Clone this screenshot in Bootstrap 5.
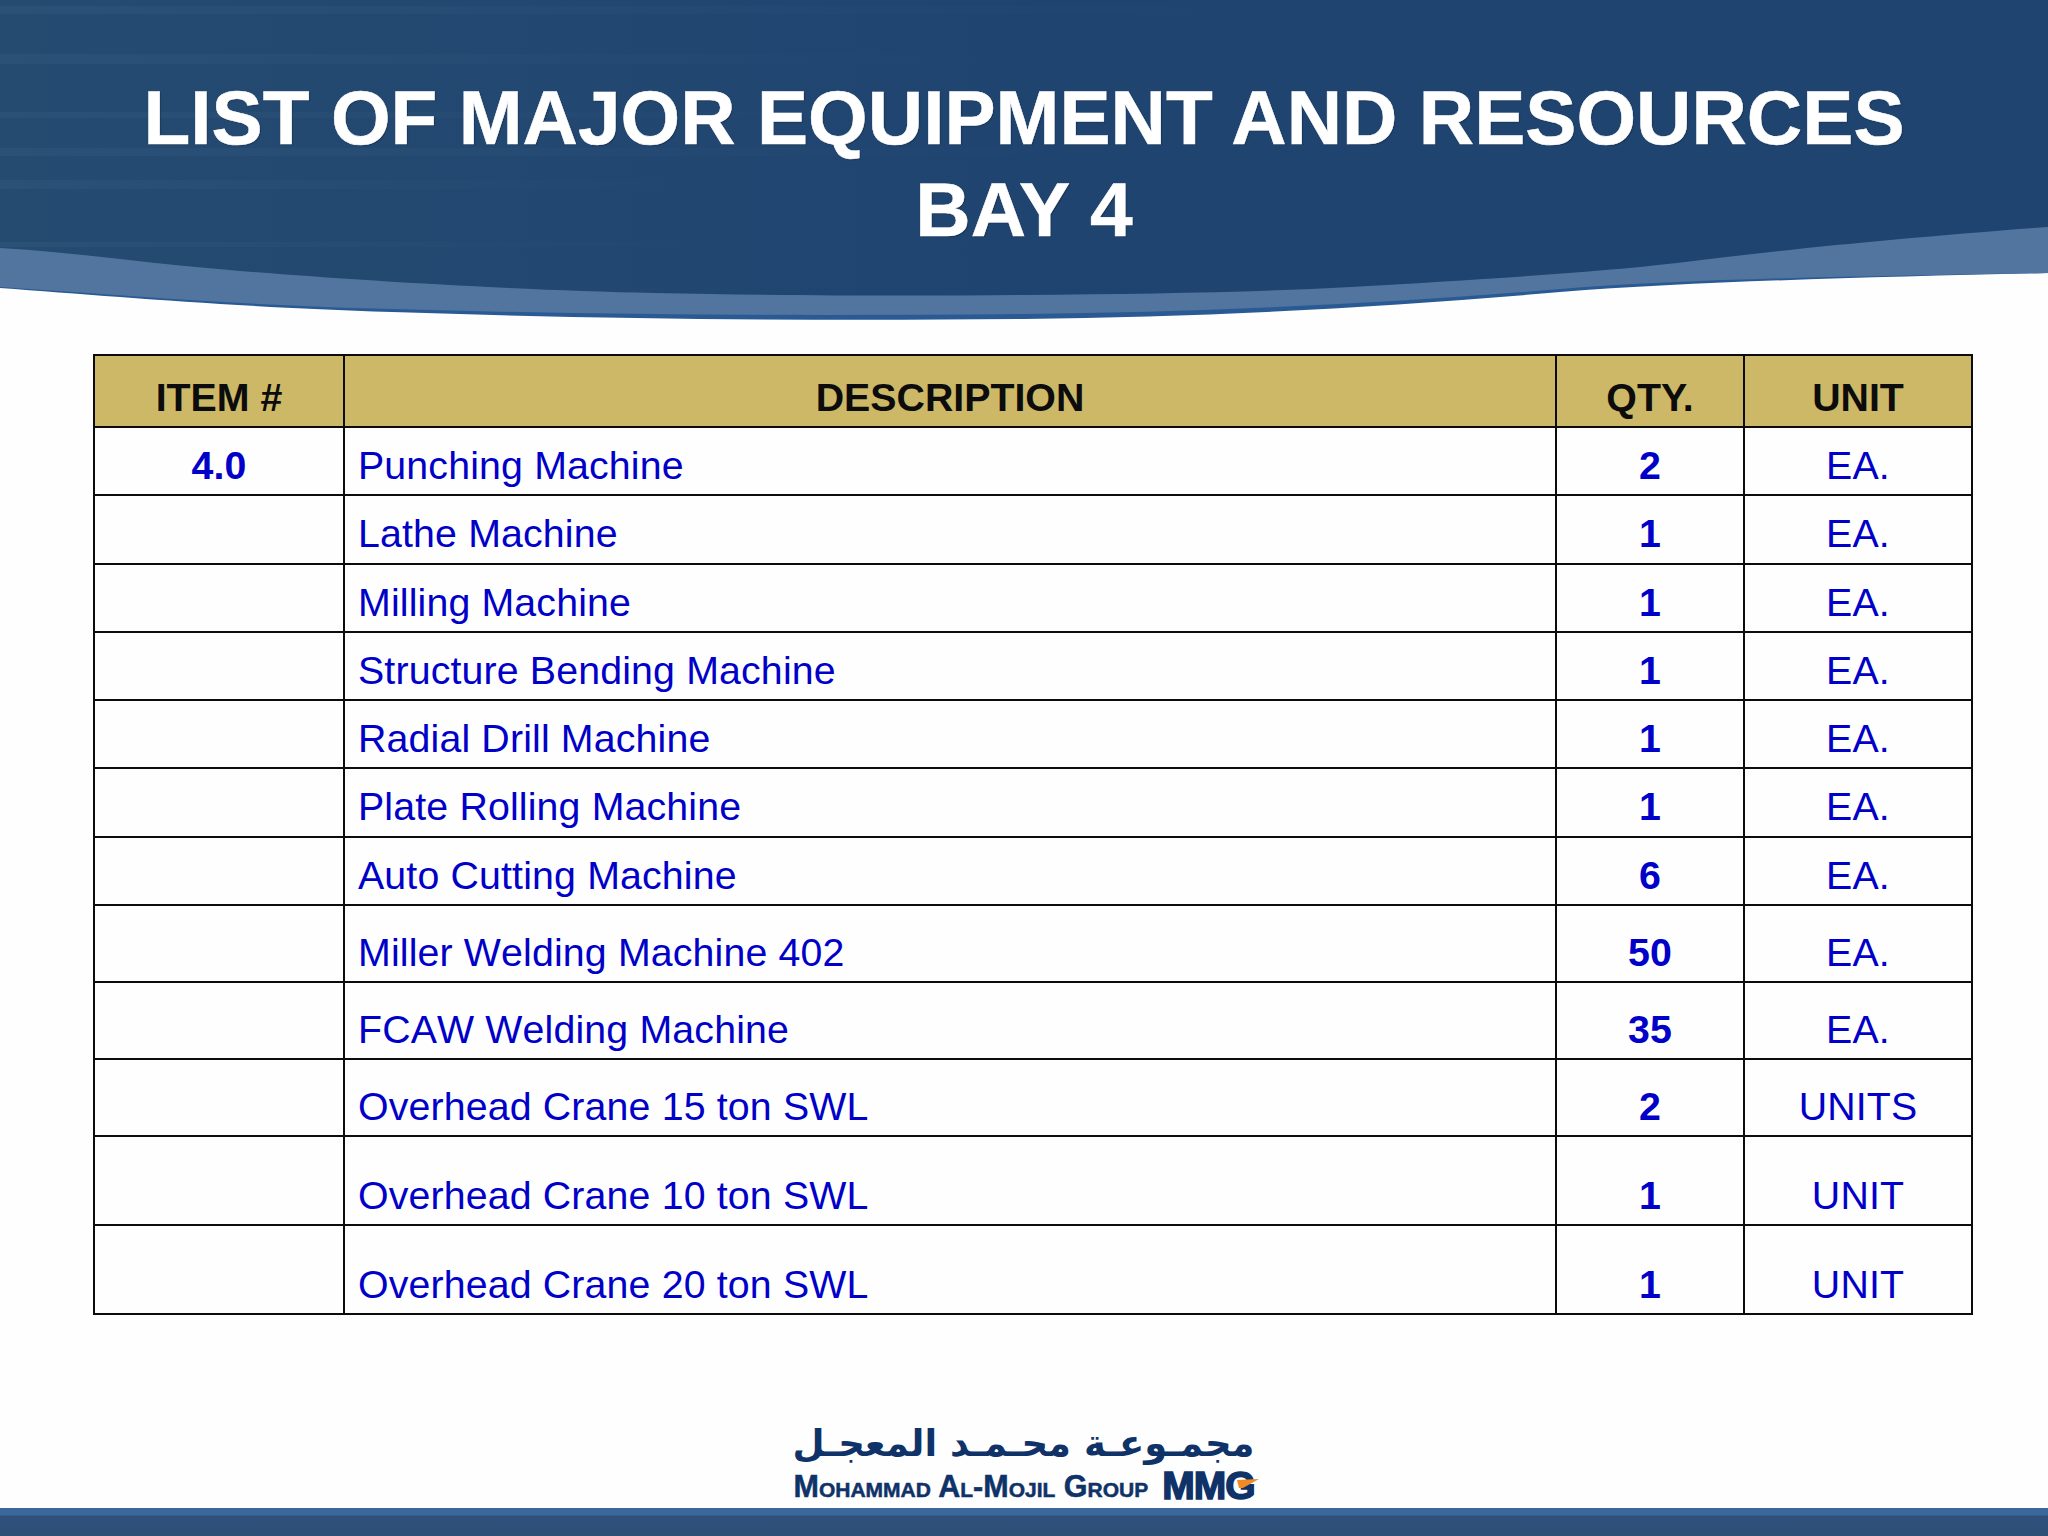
<!DOCTYPE html>
<html lang="en">
<head>
    <meta charset="UTF-8">
    <meta name="viewport" content="width=device-width, initial-scale=1.0">
    <title>List of Major Equipment and Resources</title>
    <link href="https://cdn.jsdelivr.net/npm/bootstrap@5.3.0/dist/css/bootstrap.min.css" rel="stylesheet">
    <style>
        body {
            background-color: #fefefe;
            font-family: "Liberation Sans", Arial, sans-serif;
            min-height: 1536px;
        }

        .banner {
            height: 354px;
            position: relative;
        }

        .banner svg {
            position: absolute;
            left: 0;
            top: 0;
        }

        .banner h1 {
            position: relative;
            color: #fff;
            font-size: 76.7px;
            font-weight: 700;
            line-height: 92px;
            padding-top: 72px;
            margin: 0;
            -webkit-text-stroke: .5px #fff;
            text-shadow: 1px 1px 1px rgba(20, 30, 50, .5);
        }

        .equip-wrap {
            padding-left: 93px;
        }

        .equip {
            width: 1878px;
            table-layout: fixed;
            margin-bottom: 0;
            --bs-table-bg: transparent;
        }

        .equip th,
        .equip td {
            border: 2px solid #0c0c0c;
            padding: 0 14px 9px;
            font-size: 39.3px;
            line-height: 1;
            vertical-align: bottom;
            color: #0000c8;
        }

        .equip td {
            font-kerning: none;
            letter-spacing: .15px;
            height: 68.3px;
        }

        .equip td.desc { padding-left: 13px; }

        .equip th {
            background-color: #ccb866;
            color: #0c0c0c;
            height: 72px;
        }

        .equip tr.mid td { height: 77px; }
        .equip tr.tall td { height: 89px; }

        .logo {
            width: 461px;
            color: #0f3268;
            margin-bottom: 7px;
        }

        .logo-ar {
            font-family: "DejaVu Sans", sans-serif;
            font-weight: 700;
            font-size: 37px;
            line-height: 44px;
            margin-bottom: 5px;
            white-space: nowrap;
        }

        .logo-en {
            font-weight: 700;
            font-size: 30.5px;
            line-height: 30px;
            font-variant: small-caps;
            white-space: nowrap;
            -webkit-text-stroke: .5px #0f3268;
        }

        .logo-mark {
            position: relative;
            font-size: 39px;
            line-height: 30px;
            font-weight: 700;
            letter-spacing: -1px;
            -webkit-text-stroke: 1.5px #0f3268;
        }

        .logo-mark svg {
            position: absolute;
            right: -4px;
            top: 8px;
        }

        .foot-bar {
            height: 28px;
            background: linear-gradient(#3a689b 0, #3a689b 7px, #2f507a 8px, #2e4f78 100%);
        }
    </style>
</head>
<body class="d-flex flex-column">

<!-- Title banner -->
<header class="banner text-center">
    <svg width="2048" height="325" viewBox="0 0 2048 325">
        <defs>
            <linearGradient id="sky" x1="0" y1="0" x2="1" y2="0">
                <stop offset="0" stop-color="#264b71"/>
                <stop offset=".5" stop-color="#1f4470"/>
                <stop offset="1" stop-color="#1f4470"/>
            </linearGradient>
            <linearGradient id="streak" x1="0" y1="0" x2="1" y2="0">
                <stop offset="0" stop-color="#5b86a8" stop-opacity=".1"/>
                <stop offset="1" stop-color="#5b86a8" stop-opacity="0"/>
            </linearGradient>
        </defs>
        <!-- edge under the light band -->
        <path fill="#2a5a94" d="M0 288 C110 296 230 307 392 312 C600 319 800 321 1024 319 C1200 317 1380 308 1560 292 C1700 281 1880 277 2048 273 L2048 200 L0 200 Z"/>
        <!-- light band -->
        <path fill="#51759f" d="M0 287 C110 294 230 305 392 309 C600 315 800 316 1024 314 C1200 312 1380 304 1560 289 C1700 278 1880 276 2048 273 L2048 200 L0 200 Z"/>
        <!-- dark sky -->
        <path fill="url(#sky)" d="M0 248 C70 252 140 262 196 267 C300 277 500 290 653 293 C800 296 920 296 1024 295 C1150 294 1260 292 1351 287 C1470 280 1590 273 1677 263 C1780 250 1900 238 2048 227 L2048 0 L0 0 Z"/>
        <rect x="0" y="6" width="1300" height="8" fill="url(#streak)"/>
        <rect x="0" y="54" width="1000" height="10" fill="url(#streak)"/>
        <rect x="0" y="112" width="900" height="6" fill="url(#streak)"/>
        <rect x="0" y="148" width="1100" height="8" fill="url(#streak)"/>
        <rect x="0" y="180" width="700" height="9" fill="url(#streak)"/>
        <rect x="0" y="242" width="740" height="5" fill="url(#streak)"/>
    </svg>
    <h1>LIST OF MAJOR EQUIPMENT AND RESOURCES<br>BAY 4</h1>
</header>

<!-- Equipment table -->
<div class="equip-wrap">
    <table class="table equip">
        <colgroup>
            <col style="width: 250px">
            <col style="width: 1212px">
            <col style="width: 188px">
            <col style="width: 228px">
        </colgroup>
        <thead>
        <tr class="text-center">
            <th>ITEM #</th>
            <th>DESCRIPTION</th>
            <th>QTY.</th>
            <th>UNIT</th>
        </tr>
        </thead>
        <tbody>
        <tr><td class="text-center fw-bold">4.0</td><td class="desc">Punching Machine</td><td class="text-center fw-bold">2</td><td class="text-center">EA.</td></tr>
        <tr><td></td><td class="desc">Lathe Machine</td><td class="text-center fw-bold">1</td><td class="text-center">EA.</td></tr>
        <tr><td></td><td class="desc">Milling Machine</td><td class="text-center fw-bold">1</td><td class="text-center">EA.</td></tr>
        <tr><td></td><td class="desc">Structure Bending Machine</td><td class="text-center fw-bold">1</td><td class="text-center">EA.</td></tr>
        <tr><td></td><td class="desc">Radial Drill Machine</td><td class="text-center fw-bold">1</td><td class="text-center">EA.</td></tr>
        <tr><td></td><td class="desc">Plate Rolling Machine</td><td class="text-center fw-bold">1</td><td class="text-center">EA.</td></tr>
        <tr><td></td><td class="desc">Auto Cutting Machine</td><td class="text-center fw-bold">6</td><td class="text-center">EA.</td></tr>
        <tr class="mid"><td></td><td class="desc">Miller Welding Machine 402</td><td class="text-center fw-bold">50</td><td class="text-center">EA.</td></tr>
        <tr class="mid"><td></td><td class="desc">FCAW Welding Machine</td><td class="text-center fw-bold">35</td><td class="text-center">EA.</td></tr>
        <tr class="mid"><td></td><td class="desc">Overhead Crane 15 ton SWL</td><td class="text-center fw-bold">2</td><td class="text-center">UNITS</td></tr>
        <tr class="tall"><td></td><td class="desc">Overhead Crane 10 ton SWL</td><td class="text-center fw-bold">1</td><td class="text-center">UNIT</td></tr>
        <tr class="tall"><td></td><td class="desc">Overhead Crane 20 ton SWL</td><td class="text-center fw-bold">1</td><td class="text-center">UNIT</td></tr>
        </tbody>
    </table>
</div>

<!-- Logo and bottom bar -->
<div class="mt-auto">
    <div class="logo mx-auto">
        <div class="logo-ar text-center" dir="rtl" lang="ar">مجمـوعـة محـمـد المعجـل</div>
        <div class="d-flex justify-content-between align-items-end">
            <span class="logo-en">Mohammad Al-Mojil Group</span>
            <span class="logo-mark">MMG
                <svg width="22" height="10" viewBox="0 0 22 10"><path fill="#f08a24" d="M0 1 L22 0 L6 9 L2 9 Z"/></svg>
            </span>
        </div>
    </div>
    <div class="foot-bar"></div>
</div>

<script src="https://cdn.jsdelivr.net/npm/bootstrap@5.3.0/dist/js/bootstrap.bundle.min.js"></script>
</body>
</html>
